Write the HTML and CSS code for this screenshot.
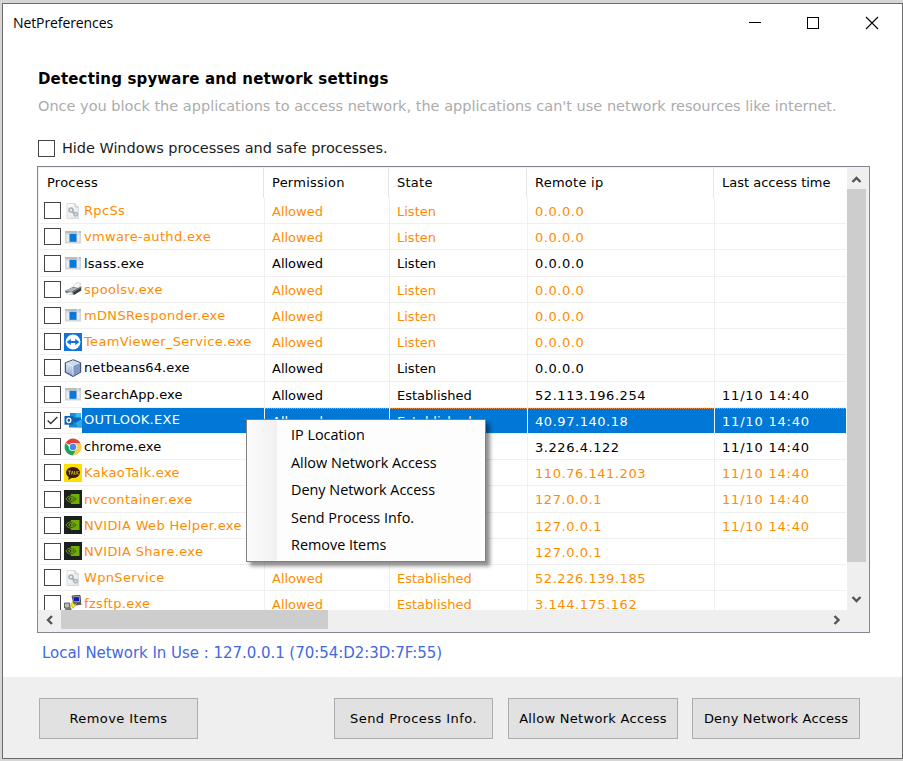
FILE: index.html
```
<!DOCTYPE html>
<html lang="en">
<head>
<meta charset="utf-8">
<title>NetPreferences</title>
<link rel="stylesheet" href="styles.css">
</head>
<body>
<svg width="0" height="0" class="defs">
  <defs>
    <linearGradient id="paper" x2="1" y2="1"><stop stop-color="#fff"/><stop offset="1" stop-color="#dfe3e6"/></linearGradient>
    <linearGradient id="cubeL" x2="0" y2="1"><stop stop-color="#eef4fc"/><stop offset="1" stop-color="#8fa9d0"/></linearGradient>
  </defs>
  <symbol id="i-gear" viewBox="0 0 18 18"><path d="M3 1.500h8l3.500 3.500v11.500H3z" fill="url(#paper)" stroke="#cfd3d6" stroke-width=".8"/><path d="M11 1.500V5h3.500" fill="none" stroke="#c0c4c7" stroke-width=".8"/><circle cx="7" cy="8" r="2" fill="#e8ebed" stroke="#a9b2b8" stroke-width="1.600"/><path d="M8.500 9.500l3 3.500" stroke="#a9b2b8" stroke-width="2"/><circle cx="11.600" cy="12.200" r="1.700" fill="#dce0e3" stroke="#adb6bc" stroke-width="1.500"/></symbol>
  <symbol id="i-app" viewBox="0 0 18 18"><path d="M1 3h16v12.500H1z" fill="#d3d5d6"/><path d="M1 3h16v2H1z" fill="#b9bdc0"/><path d="M2.500 6.500h3v7h-3zM13 6.500h2.500v7H13z" fill="#ededed"/><path d="M5.500 5.800h7v8h-7z" fill="#0879dc"/><path d="M13 3.500h2v1h-2z" fill="#fff"/></symbol>
  <symbol id="i-printer" viewBox="0 0 18 18"><path d="M9 7l3.500-4.500 4.500 1-3 5z" fill="#fbfbfb" stroke="#c5c5c5" stroke-width=".7"/><path d="M.8 11l8-4 5.500 1 3-2v4.500L10 14.500 3 14z" fill="#6d7073"/><path d="M1 11l7.500-3.500 5 1-6 3.200z" fill="#b2b5b7"/><path d="M1.500 13.200l5-1.300 3.200 1.200-4.200 2z" fill="#e6e8ea"/><path d="M9 12.500l8-4.500v2.500L10 15z" fill="#393c3f"/></symbol>
  <symbol id="i-tv" viewBox="0 0 18 18"><path d="M0 0h18v18H0z" fill="#0e75df"/><circle cx="9" cy="9" r="7.400" fill="#fff"/><path d="M2.600 9l4.200-3.300v2.200h4.400V5.700L15.400 9l-4.200 3.300v-2.200H6.800v2.200z" fill="#0e75df"/></symbol>
  <symbol id="i-cube" viewBox="0 0 18 18"><path d="M9 .8l7.600 3.100v9.300L9 17.400l-7.600-4.200V3.900z" fill="url(#cubeL)" stroke="#465478" stroke-width="1.200"/><path d="M9 7l7-3v9l-7 3.900z" fill="#8299c4"/><path d="M2 4l7-2.600L16 4 9 7z" fill="#c9dcf1"/><path d="M2 4.500L9 7v9.700" fill="none" stroke="#f5f9ff" stroke-width=".7"/></symbol>
  <symbol id="i-outlook" viewBox="0 0 18 18"><path d="M6 2h11v10H6z" fill="#0d65b9"/><path d="M6 2h5.500v4.500H6z" fill="#168ddc"/><path d="M11.500 2H17v4.500h-5.500z" fill="#38bdf0"/><path d="M5 8l6.500 4L18 8v8.500H5z" fill="#1689d8"/><path d="M11.500 12L18 8v8.500h-4z" fill="#2bacea"/><path d="M.5 5h8.700v8.700H.5z" fill="#0764b7"/><ellipse cx="4.850" cy="9.300" rx="2" ry="2.200" fill="none" stroke="#fff" stroke-width="1.300"/></symbol>
  <symbol id="i-chrome" viewBox="0 0 18 18"><circle cx="9" cy="9" r="8.400" fill="#fff"/><path d="M9 9L1.730 4.800A8.400 8.400 0 0 1 16.270 4.800z" fill="#df4436"/><path d="M9 9h-4L1.730 4.800A8.400 8.400 0 0 0 9 17.400l3.600-6.300z" fill="#1ca35c"/><path d="M9 5h7.400A8.400 8.400 0 0 1 9 17.400l3.500-6.400z" fill="#fdcd41"/><circle cx="9" cy="9" r="4.100" fill="#fff"/><circle cx="9" cy="9" r="3.300" fill="#4b86ee"/></symbol>
  <symbol id="i-kakao" viewBox="0 0 18 18"><path d="M0 0h18v18H0z" fill="#fbe000"/><ellipse cx="9" cy="8.500" rx="6.900" ry="5.500" fill="#3b1c16"/><path d="M5 12l-.7 4 4-2.500z" fill="#3b1c16"/><path d="M4 7h3M5.500 7v3.500M7.300 10.500l1-3.500 1 3.500M10.500 7v3.200h1.300M12.800 7v3.500M14.500 7l-1.500 1.700 1.500 1.800" fill="none" stroke="#d9bd14" stroke-width=".8"/></symbol>
  <symbol id="i-nv" viewBox="0 0 18 18"><path d="M0 0h18v18H0z" fill="#1d211e"/><path d="M7 4h8.500v10H7z" fill="#70ad08"/><path d="M2 9c2-3.700 7-4.500 10.500 0C9 13.500 4.500 13 2 9z" fill="#1d211e" stroke="#65a009" stroke-width="1"/><path d="M4.700 9C6.500 6.500 9 7 10.700 9 8.700 11.500 6.500 11 4.700 9z" fill="none" stroke="#70ad08" stroke-width="1.100"/><circle cx="8" cy="9" r="1" fill="#70ad08"/></symbol>
  <symbol id="i-ftp" viewBox="0 0 18 18"><path d="M8 1l8-.7.700 7-7 .7z" fill="#a6a9a2" stroke="#292929" stroke-width=".8"/><path d="M9.500 2.300l5.300-.4.400 4-5 .4z" fill="#0b1ab4"/><path d="M9 8l8-.8.500 2.500-7.500 1z" fill="#595959"/><path d="M.5 8h5v5h-5z" fill="#bbb" stroke="#444" stroke-width=".8"/><path d="M1 13l6-.8.8 3-6.500.8z" fill="#777"/><path d="M5 12l4-5.500 1 3 3-1.500-4 5.500-1-2.500z" fill="#f7eb16" stroke="#807a13" stroke-width=".4"/></symbol>
</svg>

<div class="window">
  <header class="titlebar">
    <span class="app-title">NetPreferences</span>
    <svg class="controls" width="140" height="20" viewBox="0 0 140 20" shape-rendering="crispEdges" fill="none" stroke="#000">
      <path d="M3 9.500h12"/><path d="M61.500 4.500h11v11h-11z"/><path d="M120 4l12 12M132 4l-12 12" shape-rendering="auto" stroke-width="1.100"/>
    </svg>
  </header>
  <main class="content">
    <h1>Detecting spyware and network settings</h1>
    <p class="hint">Once you block the applications to access network, the applications can't use network resources like internet.</p>
    <label class="hide-option"><i class="check"></i><span>Hide Windows processes and safe processes.</span></label>
    <section class="list">
      <div class="viewport">
        <div class="head"><span>Process</span><span>Permission</span><span>State</span><span>Remote ip</span><span>Last access time</span></div>
        <div id="rows"></div>
      </div>
      <div class="vscroll">
        <svg width="19" height="20" viewBox="0 0 19 20"><path d="M5.500 13l4-4 4 4"/></svg>
        <div class="vthumb"></div>
        <svg class="down" width="19" height="20" viewBox="0 0 19 20"><path d="M5.500 7l4 4 4-4"/></svg>
      </div>
      <div class="hscroll">
        <svg width="22" height="20" viewBox="0 0 22 20"><path d="M13 6l-4 4 4 4"/></svg>
        <div class="hthumb"></div>
        <svg class="right" width="22" height="20" viewBox="0 0 22 20"><path d="M8.500 6l4 4-4 4"/></svg>
      </div>
    </section>
    <p class="status">Local Network In Use : 127.0.0.1 (70:54:D2:3D:7F:55)</p>
  </main>
  <footer class="actions">
    <button class="b-remove">Remove Items</button>
    <button class="b-send">Send Process Info.</button>
    <button class="b-allow">Allow Network Access</button>
    <button class="b-deny">Deny Network Access</button>
  </footer>
  <div class="menu">
    <div>IP Location</div><div>Allow Network Access</div><div>Deny Network Access</div><div>Send Process Info.</div><div>Remove Items</div>
  </div>
</div>
<script src="rows.js"></script>
</body>
</html>
```
FILE: rows.js
```
// icon, process, permission, state, remote ip, last access time, row class
const rows = [
  ["gear", "RpcSs", "Allowed", "Listen", "0.0.0.0", "", "warn"],
  ["app", "vmware-authd.exe", "Allowed", "Listen", "0.0.0.0", "", "warn"],
  ["app", "lsass.exe", "Allowed", "Listen", "0.0.0.0", "", ""],
  ["printer", "spoolsv.exe", "Allowed", "Listen", "0.0.0.0", "", "warn"],
  ["app", "mDNSResponder.exe", "Allowed", "Listen", "0.0.0.0", "", "warn"],
  ["tv", "TeamViewer_Service.exe", "Allowed", "Listen", "0.0.0.0", "", "warn"],
  ["cube", "netbeans64.exe", "Allowed", "Listen", "0.0.0.0", "", ""],
  ["app", "SearchApp.exe", "Allowed", "Established", "52.113.196.254", "11/10 14:40", ""],
  ["outlook", "OUTLOOK.EXE", "Allowed", "Established", "40.97.140.18", "11/10 14:40", "selected"],
  ["chrome", "chrome.exe", "", "", "3.226.4.122", "11/10 14:40", ""],
  ["kakao", "KakaoTalk.exe", "", "", "110.76.141.203", "11/10 14:40", "warn"],
  ["nv", "nvcontainer.exe", "", "", "127.0.0.1", "11/10 14:40", "warn"],
  ["nv", "NVIDIA Web Helper.exe", "", "", "127.0.0.1", "11/10 14:40", "warn"],
  ["nv", "NVIDIA Share.exe", "", "", "127.0.0.1", "", "warn"],
  ["gear", "WpnService", "Allowed", "Established", "52.226.139.185", "", "warn"],
  ["ftp", "fzsftp.exe", "Allowed", "Established", "3.144.175.162", "", "warn"]
];
const tick = '<svg viewBox="0 0 17 17"><path d="M3 8.500l3.500 3.500L14 4.500" fill="none" stroke="#333" stroke-width="1.500"/></svg>';
document.getElementById("rows").innerHTML = rows.map(([icon, name, perm, state, ip, time, cls]) => `
<div class="row ${cls}">
  <div class="process"><i class="check">${cls === "selected" ? tick : ""}</i><svg class="icon"><use href="#i-${icon}"/></svg><span>${name}</span></div>
  <div class="cell">${perm}</div><div class="cell">${state}</div><div class="cell ip">${ip}</div><div class="cell last">${time}</div>
</div>`).join("");
```
FILE: styles.css
```
* { box-sizing: border-box; }
body { margin: 0; width: 903px; height: 761px; overflow: hidden; background: #d6d6d6; padding: 3px 0 0 2px; font-family: "DejaVu Sans", sans-serif; color: #000; }
.defs { position: absolute; }
.window { position: relative; width: 901px; height: 756px; border: 1px solid #6b6b6b; background: #fff; display: flex; flex-direction: column; }
.titlebar { height: 37px; margin-bottom: 1px; display: flex; justify-content: space-between; padding: 0 16px 0 10px; align-items: center; }
.app-title { font: 14px "Open Sans", sans-serif; letter-spacing: -.1px; }
.content { height: 635px; padding: 0 0 0 34px; }
h1 { margin: 27px 0 0 1px; font-size: 15px; line-height: 20px; font-weight: bold; letter-spacing: .16px; white-space: nowrap; }
.hint { margin: 7px 0 0 1px; font-size: 14.500px; line-height: 20px; color: #acacac; white-space: nowrap; }
.hide-option { display: flex; align-items: center; gap: 7px; margin: 21px 0 0 1px; height: 22px; font-size: 14.500px; letter-spacing: -.05px; color: #1c1c1c; white-space: nowrap; }
.check { display: block; flex: none; width: 17px; height: 17px; border: 1.500px solid #444; background: #fff; }
.check svg { display: block; width: 15px; height: 15px; }
.list { margin-top: 7px; width: 833px; height: 467px; border: 1px solid #828790; display: grid; grid-template-columns: 808px 21px; grid-template-rows: 442px 20px; padding: 1px; background: #efefef; overflow: hidden; }
.viewport { overflow: hidden; background: #fff; }
.head { display: grid; grid-template-columns: 225px 125px 138px 187px 133px; height: 30px; font-size: 13px; line-height: 30px; letter-spacing: .25px; }
.head span { border-right: 1px solid #e5e5e5; padding-left: 8px; white-space: nowrap; }
.head span:last-child { border: 0; letter-spacing: 0; }
.row { display: grid; grid-template-columns: 226px 125px 138px 187px 131px; width: 807px; height: 26.220px; font-size: 13px; line-height: 26px; }
.row > div { border-right: 1px solid #f0f0f0; border-bottom: 1px solid #f0f0f0; white-space: nowrap; overflow: hidden; }
.row > .last { border-right: 0; letter-spacing: .8px; }
.row > .ip { letter-spacing: .55px; }
.process { display: flex; align-items: center; padding-left: 5px; letter-spacing: .1px; }
.process span { padding-top: 1px; }
.warn .process { letter-spacing: .33px; }
.icon { flex: none; width: 18px; height: 18px; margin: 0 2px 0 3px; }
.cell { padding-left: 7px; line-height: 27px; }
.warn { color: #ff8c00; }
.selected { color: #fff; }
.selected .cell, .selected .process span { background: repeating-linear-gradient(90deg, #e89040 0 1px, #0078d7 1px 2px) top / 100% 1px no-repeat #0078d7; }
.selected .process span { flex: 1; height: 26px; line-height: 26px; margin-left: -2px; padding: 0 0 0 2px; letter-spacing: .3px; }
.vscroll { display: flex; flex-direction: column; padding-top: 1px; }
.vthumb { width: 19px; height: 373px; background: #cdcdcd; }
.down { margin-top: auto; }
.hscroll { display: flex; grid-column: 1 / 3; }
.hthumb { width: 267px; height: 19px; background: #cdcdcd; }
.right { margin-left: auto; margin-right: 20px; }
.vscroll path, .hscroll path { fill: none; stroke: #555; stroke-width: 2.400; }
.status { margin: 11px 0 0 5px; font-size: 15px; line-height: 18px; letter-spacing: -.04px; color: #4169e1; white-space: nowrap; }
.actions { flex: 1; background: #efefef; display: flex; align-items: flex-start; padding: 21px 0 0 36px; }
button { height: 41px; border: 1px solid #adadad; background: #e1e1e1; padding: 0; font: 13px "DejaVu Sans", sans-serif; white-space: nowrap; color: #000; }
.b-remove { width: 159px; margin-right: 136px; letter-spacing: .4px; }
.b-send { width: 159px; margin-right: 15px; letter-spacing: .45px; }
.b-allow { width: 170px; margin-right: 14px; letter-spacing: .3px; }
.b-deny { width: 168px; letter-spacing: .17px; }
.menu { position: absolute; left: 243px; top: 415px; width: 240px; height: 143px; border: 1px solid #808080; padding: 1px 0 0 44px; background: linear-gradient(90deg, #fcfcfc, #f0f0f0 30px, #fdfdfd 30px); box-shadow: 4px 4px 4px rgba(0,0,0,.45); font: 14.400px "Open Sans", sans-serif; }
.menu div { height: 27.600px; line-height: 27px; white-space: nowrap; }
```
